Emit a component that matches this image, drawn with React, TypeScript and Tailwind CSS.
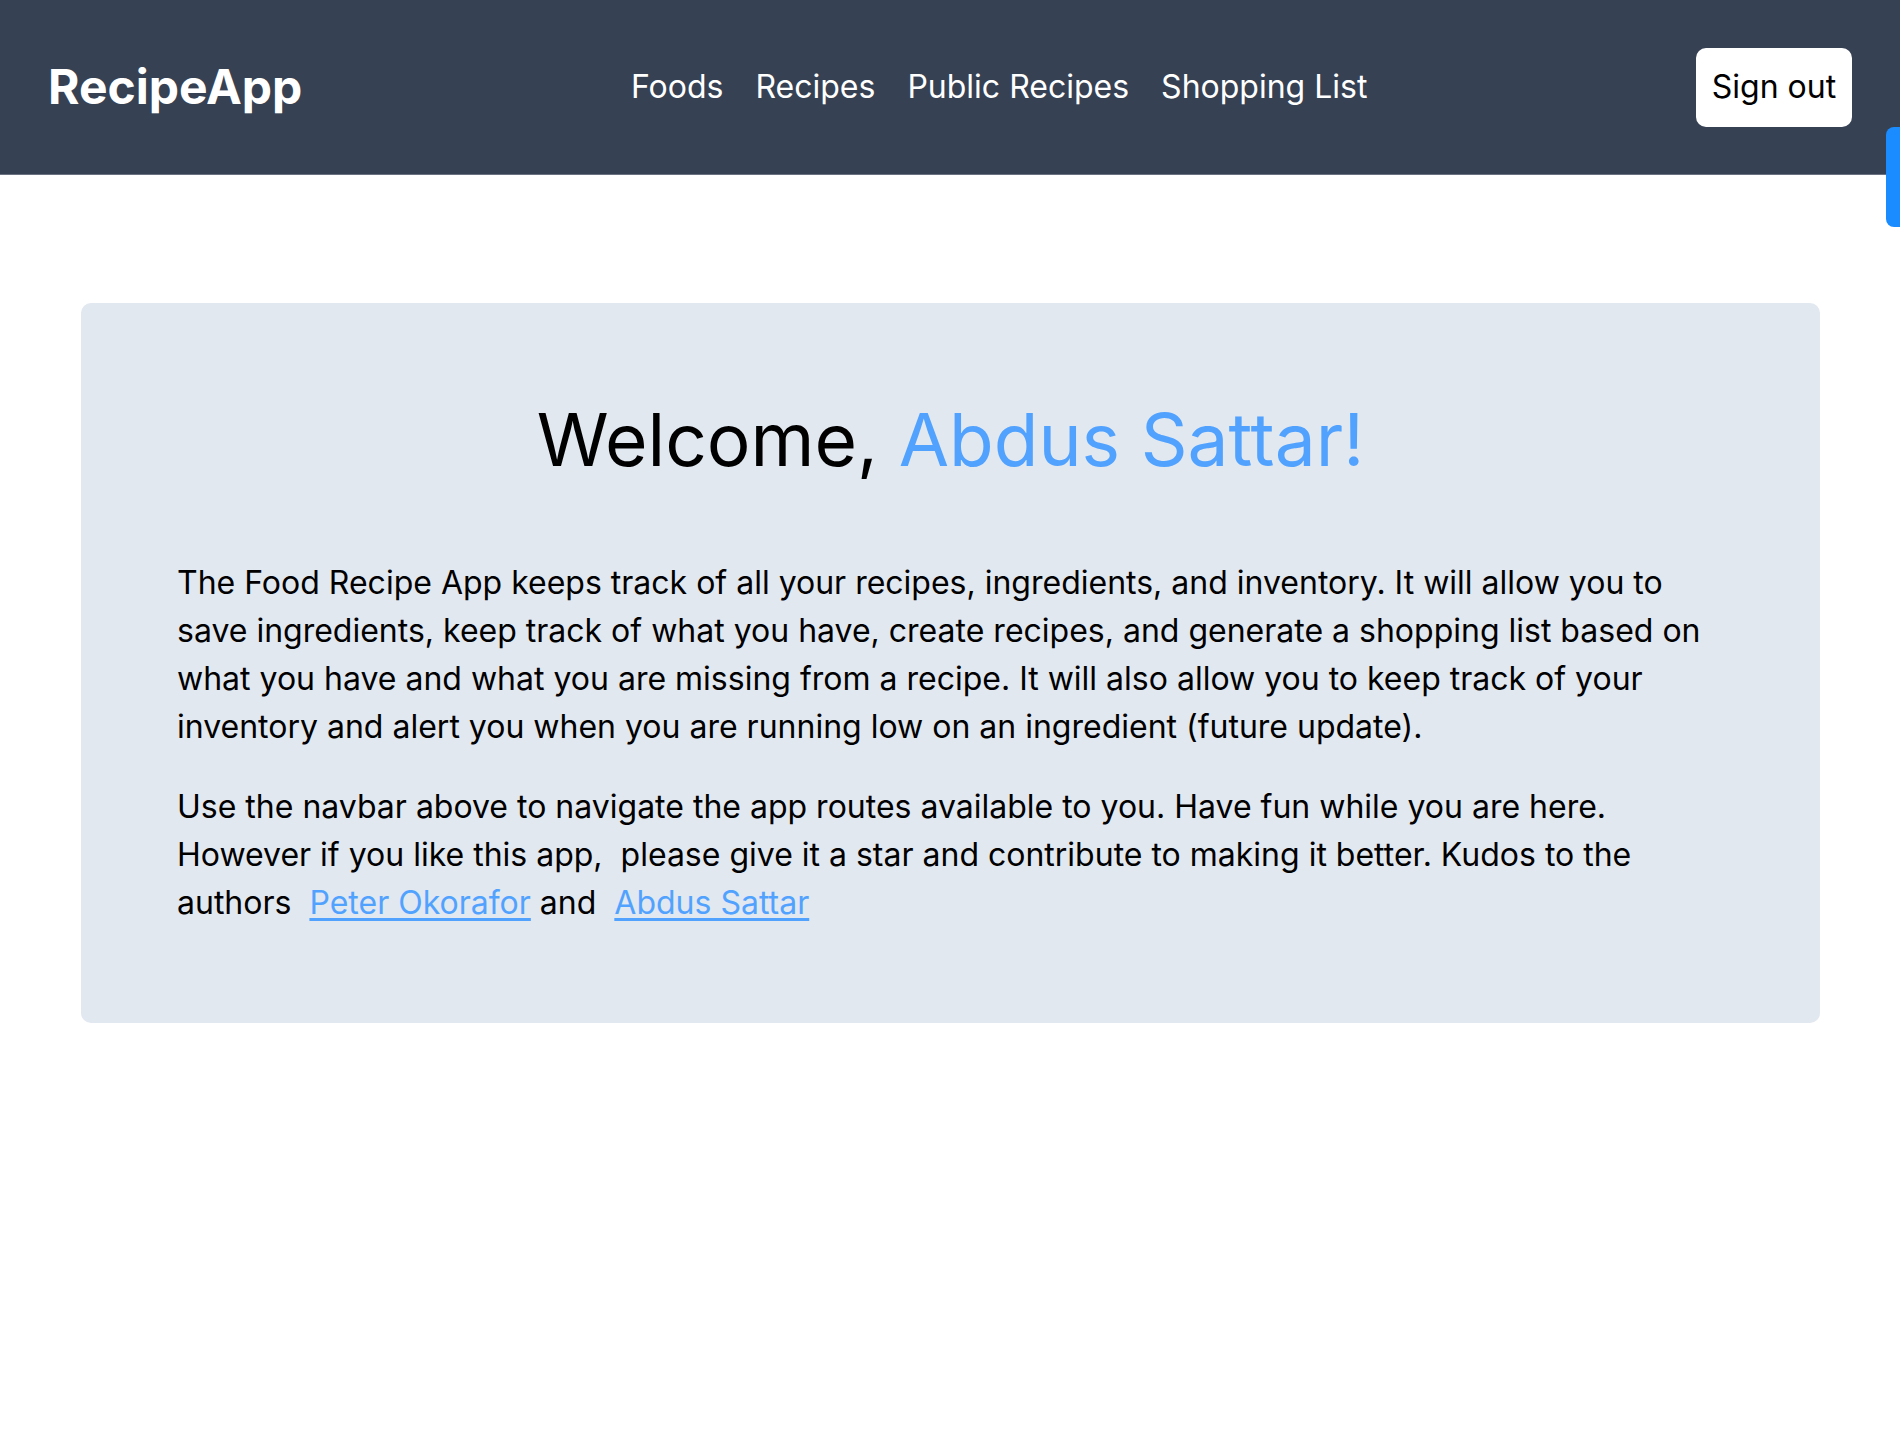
const navigationLinks = [
  { href: "#foods", label: "Foods" },
  { href: "#recipes", label: "Recipes" },
  { href: "#public", label: "Public Recipes" },
  { href: "#shopping", label: "Shopping List" },
];

function Navbar() {
  return (
    <header className="bg-gray-700 text-white h-[175px] px-12 flex items-center justify-between border-b border-gray-500">
      <a href="#" className="text-5xl font-bold leading-none">
        RecipeApp
      </a>
      <nav className="flex items-center gap-8">
        {navigationLinks.map((link) => (
          <a key={link.href} href={link.href} className="text-[32px] leading-none">
            {link.label}
          </a>
        ))}
      </nav>
      <button className="bg-white text-black text-[32px] w-[156px] h-[79px] rounded-[10px]">
        Sign out
      </button>
    </header>
  );
}

export default function App() {
  return (
    <div className="min-h-screen bg-white font-['Inter','Noto_Sans',sans-serif] text-black relative">
      <Navbar />
      <main className="pl-[81px] pr-[80px] pt-[128px]">
        <section className="bg-slate-200 rounded-[10px] px-24 pt-[100px] pb-[96px]">
          <h1 className="text-center text-[73px] leading-none mb-[83px]">
            Welcome, <span className="text-blue-400">Abdus Sattar!</span>
          </h1>
          <p className="text-[32px] leading-[48px] mb-8">
            The Food Recipe App keeps track of all your recipes, ingredients, and inventory. It will allow you to
            save ingredients, keep track of what you have, create recipes, and generate a shopping list based on
            what you have and what you are missing from a recipe. It will also allow you to keep track of your
            inventory and alert you when you are running low on an ingredient (future update).
          </p>
          <p className="text-[32px] leading-[48px]">
            Use the navbar above to navigate the app routes available to you. Have fun while you are here.
            However if you like this app,&nbsp; please give it a star and contribute to making it better. Kudos to the
            authors&nbsp;{" "}
            <a href="#" className="text-blue-400 underline underline-offset-4">
              Peter Okorafor
            </a>{" "}
            and&nbsp;{" "}
            <a href="#" className="text-blue-400 underline underline-offset-4">
              Abdus Sattar
            </a>
          </p>
        </section>
      </main>
      {/* floating side tab */}
      <div className="absolute right-0 top-[127px] w-[14px] h-[100px] bg-[#1a8cff] rounded-l-[8px]" />
    </div>
  );
}
